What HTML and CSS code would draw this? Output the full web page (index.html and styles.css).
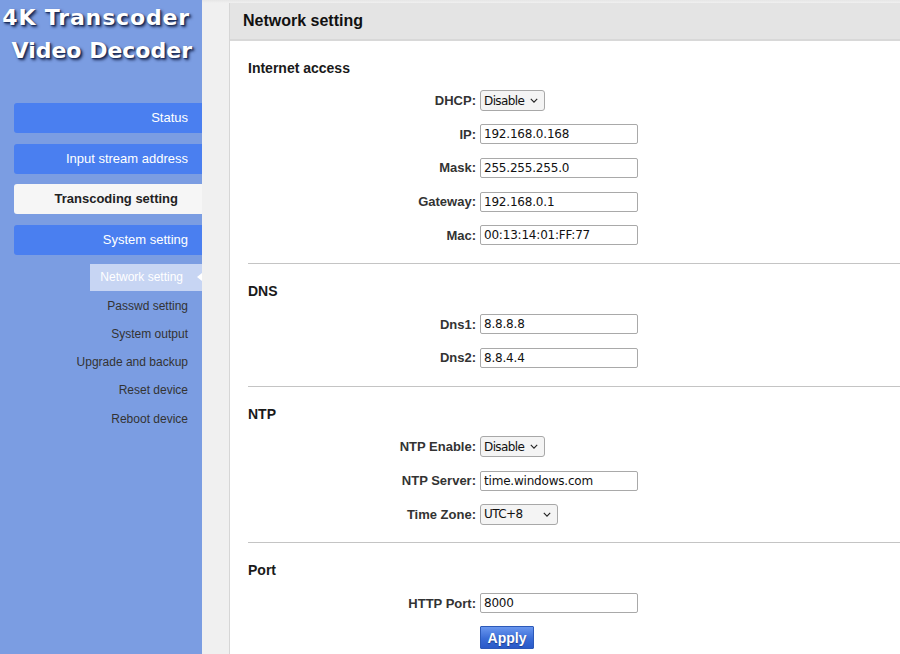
FILE: index.html
```html
<!DOCTYPE html>
<html>
<head>
<meta charset="utf-8">
<link rel="stylesheet" href="styles.css">
</head>
<body>
<div class="layout">
  <aside class="sidebar">
    <div class="logo">
      <div class="logo-l1">4K Transcoder</div>
      <div>Video Decoder</div>
    </div>
    <nav class="nav">
      <a class="nav-btn">Status</a>
      <a class="nav-btn">Input stream address</a>
      <a class="nav-btn active">Transcoding setting</a>
      <a class="nav-btn">System setting</a>
    </nav>
    <ul class="subnav">
      <li class="sub active">Network setting</li>
      <li class="sub">Passwd setting</li>
      <li class="sub">System output</li>
      <li class="sub">Upgrade and backup</li>
      <li class="sub">Reset device</li>
      <li class="sub">Reboot device</li>
    </ul>
  </aside>
  <main class="main">
    <section class="panel">
      <header class="panel-head">Network setting</header>
      <div class="panel-body">
        <div class="group first">
          <h3 class="group-title">Internet access</h3>
          <div class="row"><label>DHCP:</label><span class="sel w64"><select><option>Disable</option></select><svg viewBox="0 0 10 6" class="chev"><path d="M1 1l4 4 4-4" fill="none" stroke="#222" stroke-width="1.4"/></svg></span></div>
          <div class="row"><label>IP:</label><input type="text" value="192.168.0.168"></div>
          <div class="row"><label>Mask:</label><input type="text" value="255.255.255.0"></div>
          <div class="row"><label>Gateway:</label><input type="text" value="192.168.0.1"></div>
          <div class="row"><label>Mac:</label><input type="text" value="00:13:14:01:FF:77"></div>
        </div>
        <div class="group">
          <h3 class="group-title">DNS</h3>
          <div class="row"><label>Dns1:</label><input type="text" value="8.8.8.8"></div>
          <div class="row"><label>Dns2:</label><input type="text" value="8.8.4.4"></div>
        </div>
        <div class="group">
          <h3 class="group-title">NTP</h3>
          <div class="row"><label>NTP Enable:</label><span class="sel w64"><select><option>Disable</option></select><svg viewBox="0 0 10 6" class="chev"><path d="M1 1l4 4 4-4" fill="none" stroke="#222" stroke-width="1.4"/></svg></span></div>
          <div class="row"><label>NTP Server:</label><input type="text" value="time.windows.com"></div>
          <div class="row"><label>Time Zone:</label><span class="sel w77"><select><option>UTC+8</option></select><svg viewBox="0 0 10 6" class="chev"><path d="M1 1l4 4 4-4" fill="none" stroke="#222" stroke-width="1.4"/></svg></span></div>
        </div>
        <div class="group">
          <h3 class="group-title">Port</h3>
          <div class="row"><label>HTTP Port:</label><input type="text" value="8000"></div>
          <div class="row btn-row"><span></span><button class="apply">Apply</button></div>
        </div>
      </div>
    </section>
  </main>
</div>
</body>
</html>
```
FILE: styles.css
```css
* { box-sizing: border-box; }
html, body { margin: 0; padding: 0; }
body {
  width: 900px;
  height: 654px;
  overflow: hidden;
  font-family: "Liberation Sans", Arial, sans-serif;
  font-size: 13px;
  color: #222;
  background: #f0f0f0;
}
.layout { display: flex; height: 654px; }

.sidebar {
  width: 202px;
  flex: none;
  background: #7b9de2;
  display: flex;
  flex-direction: column;
}
.logo {
  font-family: "DejaVu Sans", Verdana, sans-serif;
  font-weight: bold;
  font-size: 22px;
  line-height: 33px;
  color: #fff;
  text-align: right;
  padding: 1px 10px 0 0;
  text-shadow: 2px 2px 3px #1b2a55, 1px 1px 1px #2a3a6a;
  height: 103px;
}
.logo-l1 { letter-spacing: 0.85px; margin-right: 2px; }
.nav { display: flex; flex-direction: column; gap: 10.5px; padding-left: 14px; }
.nav-btn {
  display: block;
  height: 30px;
  line-height: 30px;
  background: #4a7ff0;
  color: #fff;
  text-align: right;
  padding-right: 14px;
  border-radius: 3px 0 0 3px;
  font-size: 13px;
}
.nav-btn.active {
  background: #f6f6f6;
  color: #222;
  font-weight: bold;
  padding-right: 24px;
}
.subnav {
  list-style: none;
  margin: 9px 0 0;
  padding: 0;
  display: flex;
  flex-direction: column;
  align-items: flex-end;
}
.sub {
  height: 28.3px;
  line-height: 28px;
  font-size: 12px;
  color: #333;
  padding-right: 14px;
  position: relative;
}
.sub.active {
  width: 112px;
  height: 27px;
  line-height: 27px;
  background: #c7d5f3;
  color: #fff;
  text-align: right;
  padding-right: 19px;
  margin-bottom: 1px;
}
.sub.active::after {
  content: "";
  position: absolute;
  right: 0;
  top: 9px;
  border-style: solid;
  border-width: 4.5px 5px 4.5px 0;
  border-color: transparent #ffffff transparent transparent;
}

.main {
  flex: 1;
  padding: 3px 0 0 27px;
  background: linear-gradient(#e6e6e6, #f0f0f0 3px);
  overflow: hidden;
}
.panel {
  background: #fff;
  border-left: 1px solid #d6d6d6;
  height: 100%;
  width: 700px;
}
.panel-head {
  height: 38px;
  line-height: 36px;
  background: #e4e4e4;
  border-bottom: 2px solid #d8d8d8;
  padding-left: 13px;
  font-size: 16px;
  font-weight: bold;
  color: #111;
}
.panel-body { padding: 17px 0 0 18px; }
.group { border-top: 1px solid #c4c4c4; padding-top: 17px; padding-bottom: 11.5px; }
.group.first { border-top: 0; padding-top: 0; }
.group-title {
  margin: 0 0 6px;
  font-size: 14px;
  line-height: 20px;
  font-weight: bold;
  color: #1a1a1a;
}
.row {
  display: grid;
  grid-template-columns: 228px auto;
  column-gap: 4px;
  align-items: center;
  justify-items: start;
  height: 33.6px;
}
.row label {
  justify-self: end;
  font-weight: bold;
  font-size: 13px;
  color: #333;
}
.row input {
  width: 158px;
  height: 20px;
  border: 1px solid #a9a9a9;
  border-radius: 2px;
  padding: 0 3px;
  font-family: "DejaVu Sans", Tahoma, sans-serif;
  font-size: 12px;
  color: #111;
  background: #fff;
  letter-spacing: -0.2px;
}
.sel { position: relative; display: inline-block; height: 21px; }
.sel select {
  appearance: none;
  -webkit-appearance: none;
  height: 21px;
  width: 100%;
  border: 1px solid #a8a8a8;
  border-radius: 3px;
  background: #f4f4f4;
  font-family: "DejaVu Sans", Tahoma, sans-serif;
  font-size: 12px;
  color: #111;
  padding: 0 0 0 3px;
  letter-spacing: -0.6px;
}
.sel.w64 { width: 65px; }
.sel.w77 { width: 78px; }
.chev {
  position: absolute;
  right: 7px;
  top: 8px;
  width: 8px;
  height: 5px;
}
.btn-row { height: 29px; align-items: end; }
.apply {
  width: 54px;
  height: 23px;
  border: 1px solid #2c59b8;
  border-radius: 1px;
  background: linear-gradient(#6a97ef, #3a6cd6 55%, #2a5ac8);
  color: #fff;
  font-family: "Liberation Sans", Arial, sans-serif;
  font-weight: bold;
  font-size: 14px;
  padding: 0;
  text-shadow: 0 1px 1px #1a3c8a;
}
```
